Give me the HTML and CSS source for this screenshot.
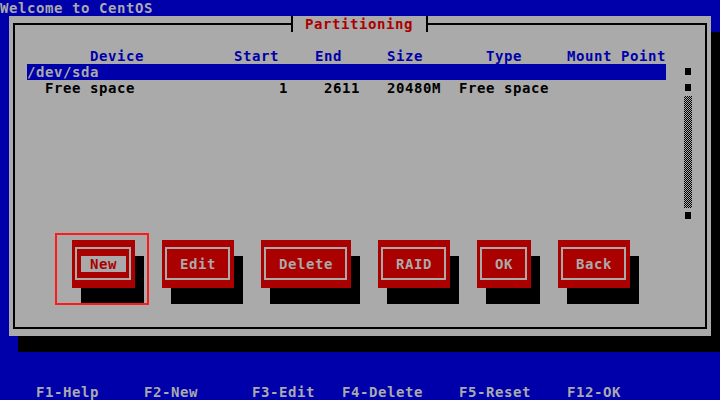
FILE: index.html
```html
<!DOCTYPE html>
<html>
<head>
<meta charset="utf-8">
<title>Partitioning</title>
<link rel="stylesheet" href="styles.css">
</head>
<body>
<div class="screen">
  <div class="topbar">Welcome to CentOS</div>
  <div class="window">
    <div class="frame">
      <div class="title">Partitioning</div>
      <div class="hdr">       Device          Start    End     Size       Type     Mount Point</div>
      <div class="listarea">
        <div class="list">
          <div class="row sel">/dev/sda</div>
          <div class="row">  Free space                1    2611   20480M  Free space</div>
        </div>
        <div class="scroll">
          <div class="cell"><span class="sq"></span></div>
          <div class="cell"><span class="sq"></span></div>
          <div class="track"></div>
          <div class="cell"><span class="sq"></span></div>
        </div>
      </div>
      <div class="buttons">
        <div class="btn focus"><div class="btn-in"><span class="lbl">New</span></div><div class="mark"></div></div>
        <div class="btn"><div class="btn-in"><span class="lbl">Edit</span></div></div>
        <div class="btn"><div class="btn-in"><span class="lbl">Delete</span></div></div>
        <div class="btn"><div class="btn-in"><span class="lbl">RAID</span></div></div>
        <div class="btn"><div class="btn-in"><span class="lbl">OK</span></div></div>
        <div class="btn"><div class="btn-in"><span class="lbl">Back</span></div></div>
      </div>
    </div>
  </div>
  <div class="help">    F1-Help     F2-New      F3-Edit   F4-Delete    F5-Reset    F12-OK</div>
</div>
</body>
</html>
```
FILE: styles.css
```css
* { box-sizing: border-box; }
html, body { margin: 0; padding: 0; }
body {
  background: #0000aa;
  font-family: "DejaVu Sans Mono", "Liberation Mono", monospace;
  font-weight: bold;
  font-size: 14px;
  letter-spacing: 0.57px;
  line-height: 16px;
  overflow: hidden;
}
.screen {
  width: 720px;
  height: 400px;
  background: #0000aa;
}
.topbar {
  height: 16px;
  color: #aaaaaa;
  white-space: pre;
}
.window {
  margin-left: 9px;
  width: 702px;
  height: 320px;
  background: #aaaaaa;
  box-shadow: 9px 16px 0 #000;
  padding: 7px 4px;
}
.frame {
  position: relative;
  height: 100%;
  border: 2px solid #000;
  padding: 23px 0 0 12px;
}
.title {
  position: absolute;
  top: -9px;
  left: 276px;
  width: 137px;
  height: 16px;
  background: #aaaaaa;
  border-left: 2px solid #000;
  border-right: 2px solid #000;
  padding-left: 12px;
  color: #aa0000;
  white-space: pre;
}
.hdr {
  height: 16px;
  color: #0000aa;
  white-space: pre;
}
.listarea {
  display: flex;
  height: 160px;
}
.list {
  width: 639px;
}
.row {
  height: 16px;
  color: #000;
  white-space: pre;
}
.row.sel {
  background: #0000aa;
  color: #aaaaaa;
}
.scroll {
  margin-left: 18px;
  width: 9px;
  display: flex;
  flex-direction: column;
}
.cell {
  height: 16px;
  padding: 4px 0 0 1px;
}
.sq {
  display: block;
  width: 6px;
  height: 7px;
  background: #000;
}
.track {
  height: 112px;
  width: 8px;
  background: repeating-conic-gradient(#000 0% 25%, #aaaaaa 0% 50%) 0 0 / 2px 2px;
}
.buttons {
  display: flex;
  gap: 27px;
  margin: 16px 0 0 45px;
}
.btn {
  position: relative;
  height: 48px;
  background: #aa0000;
  box-shadow: 9px 16px 0 #000;
  padding: 7px 4px 8px 3px;
}
.btn-in {
  height: 100%;
  border: 2px solid #aaaaaa;
  padding: 0 3px 0 4px;
  display: flex;
  align-items: center;
}
.lbl {
  display: block;
  height: 16px;
  padding: 0 9px;
  color: #aaaaaa;
  white-space: pre;
}
.btn.focus .lbl {
  background: #aaaaaa;
  color: #aa0000;
}
.mark {
  position: absolute;
  left: -17px;
  top: -7px;
  width: 94px;
  height: 72px;
  border: 2px solid #ff1a1a;
}
.help {
  margin-top: 48px;
  height: 16px;
  color: #aaaaaa;
  white-space: pre;
}
```
